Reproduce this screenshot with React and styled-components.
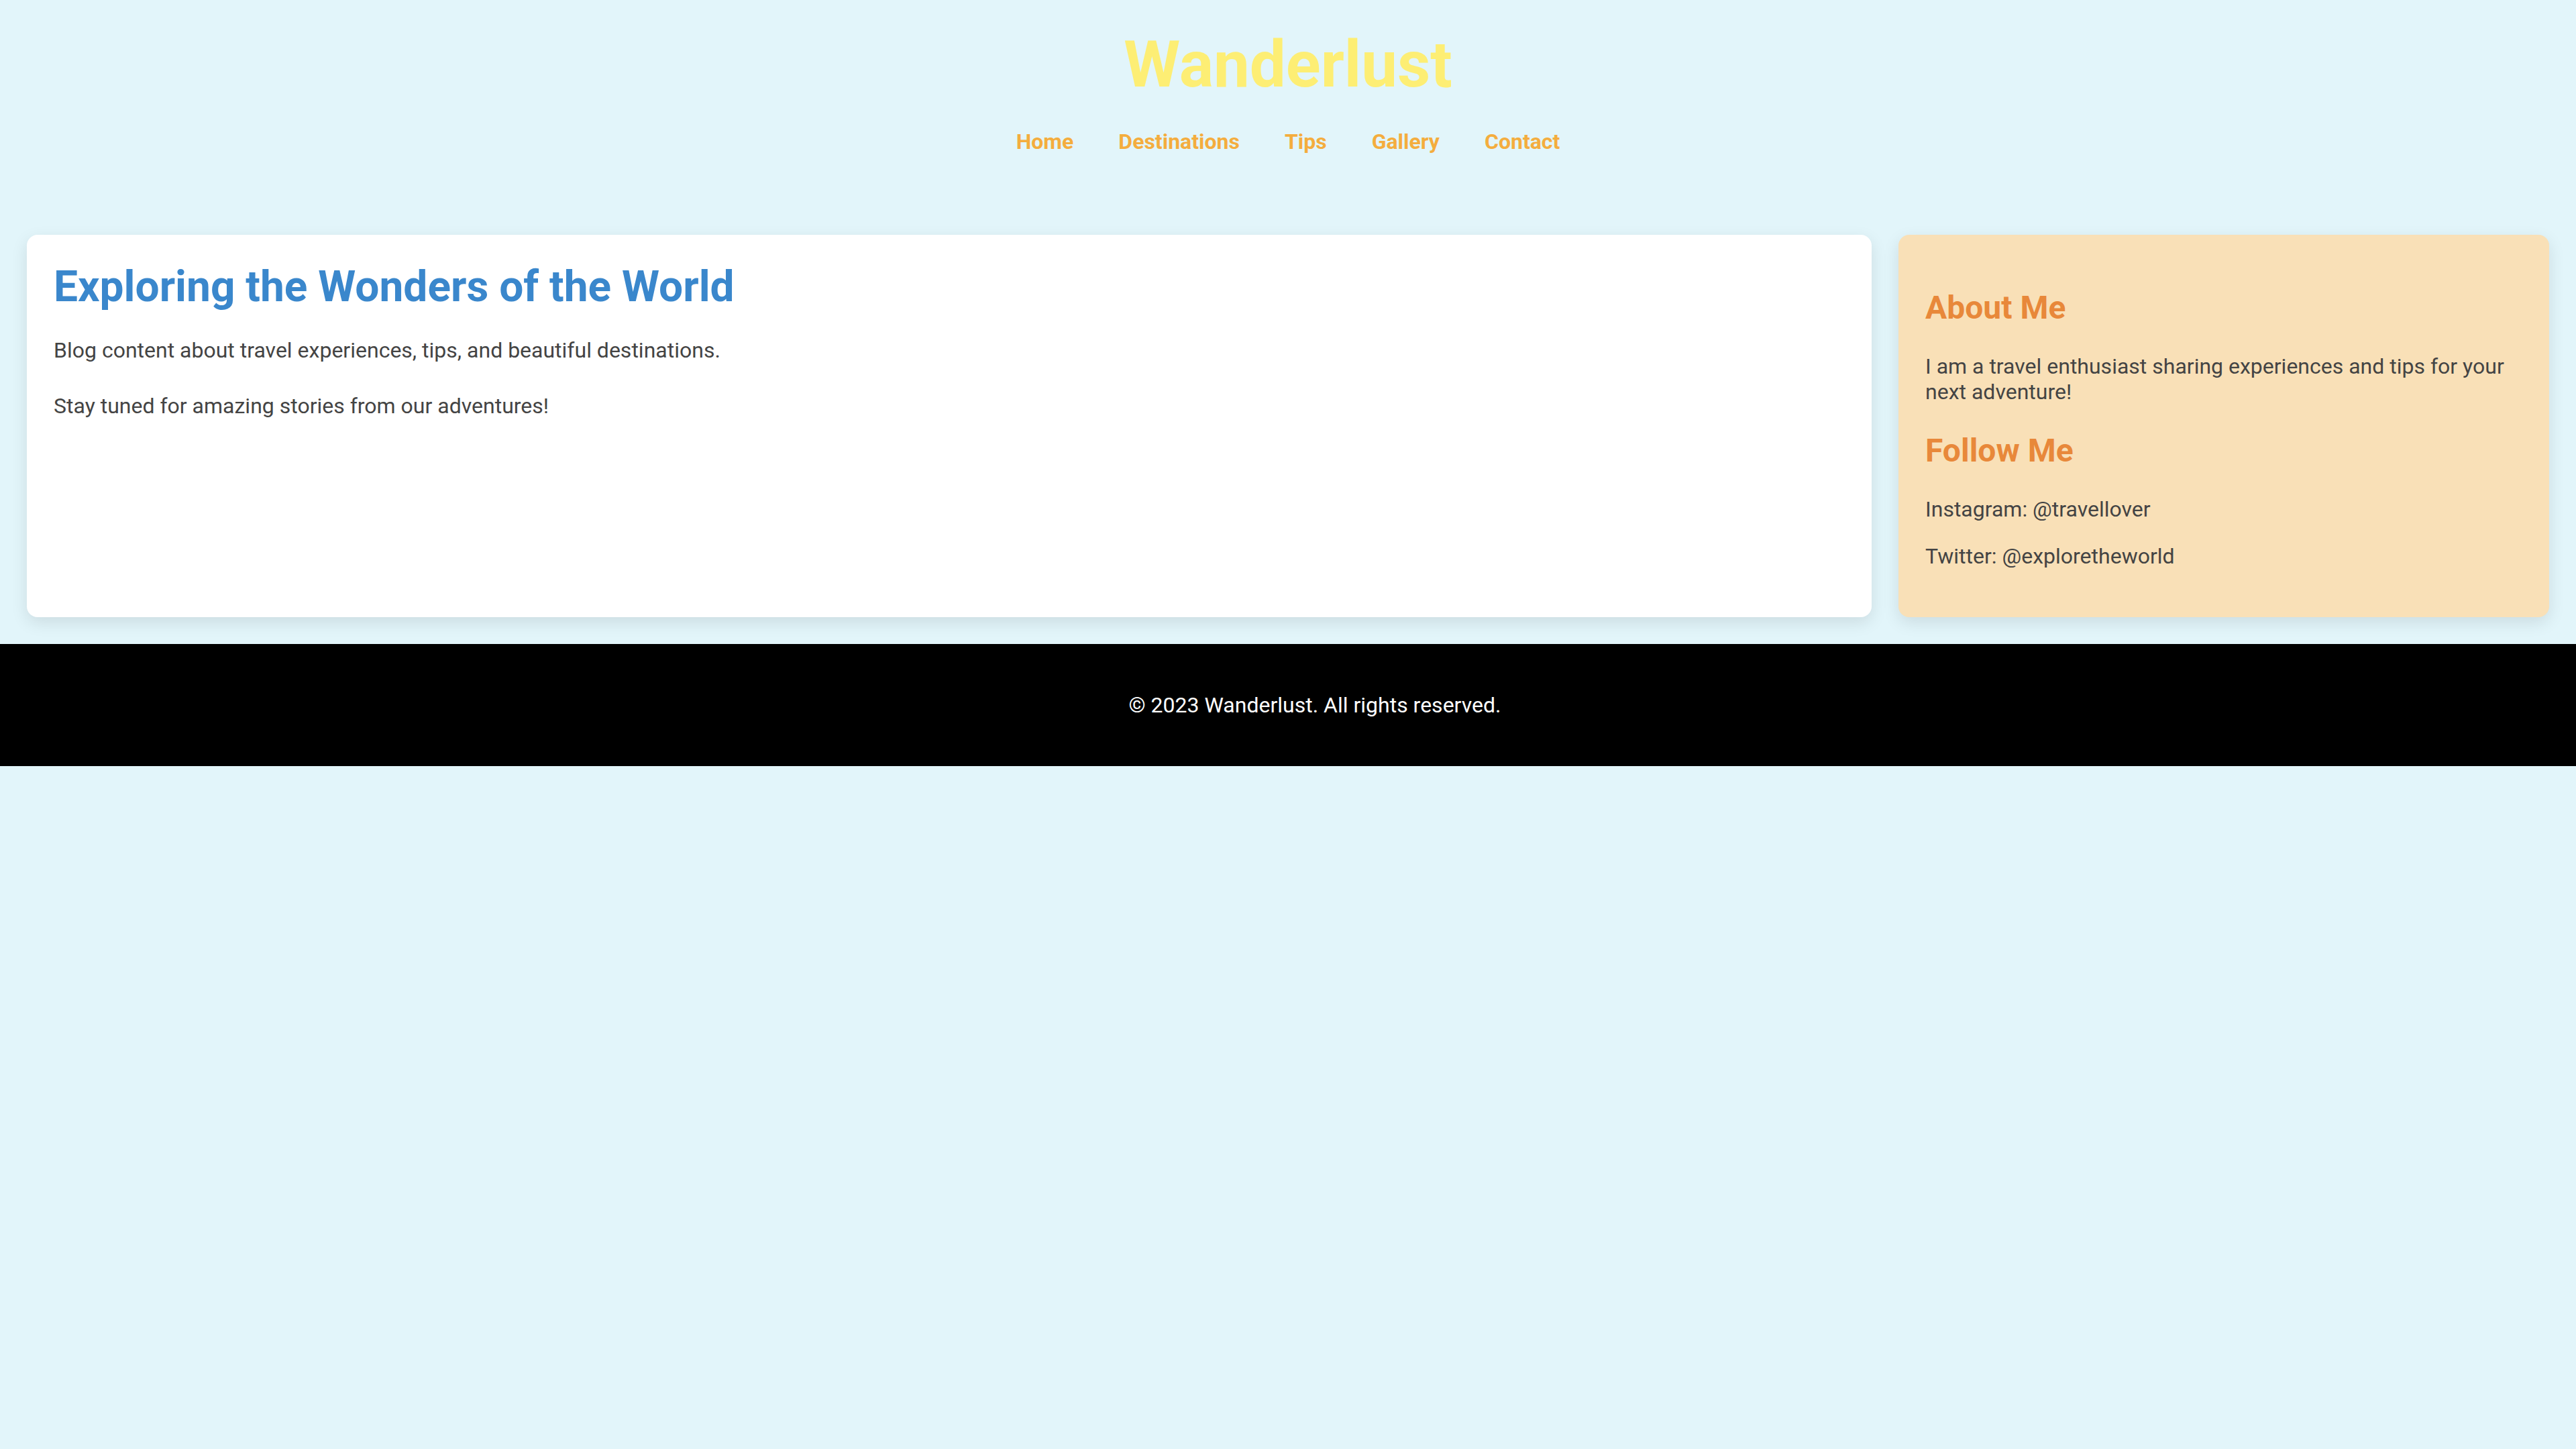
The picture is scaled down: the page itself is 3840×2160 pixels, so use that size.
import React from "react";
import styled, { createGlobalStyle } from "styled-components";

const GlobalStyle = createGlobalStyle`
  html, body {
    margin: 0;
    padding: 0;
    overflow-x: hidden;
    background-color: #e2f5fa;
    font-family: Roboto, "Liberation Sans", Arial, sans-serif;
    font-size: 32px;
    color: #444;
  }
`;

const App = () => {
  return (
    <>
      <GlobalStyle />
      <Header>
        <Logo>Wanderlust</Logo>
        <Nav>
          <NavLink href="#">Home</NavLink>
          <NavLink href="#">Destinations</NavLink>
          <NavLink href="#">Tips</NavLink>
          <NavLink href="#">Gallery</NavLink>
          <NavLink href="#">Contact</NavLink>
        </Nav>
      </Header>
      <Main>
        <Article>
          <ArticleTitle>Exploring the Wonders of the World</ArticleTitle>
          <ArticleText>
            Blog content about travel experiences, tips, and beautiful destinations.
          </ArticleText>
          <ArticleText>Stay tuned for amazing stories from our adventures!</ArticleText>
        </Article>
        <Sidebar>
          <SideTitle>About Me</SideTitle>
          <SideText>
            I am a travel enthusiast sharing experiences and tips for your next adventure!
          </SideText>
          <SideTitle>Follow Me</SideTitle>
          <SideText>Instagram: @travellover</SideText>
          <SideText>Twitter: @exploretheworld</SideText>
        </Sidebar>
      </Main>
      <Footer>
        <FooterText>© 2023 Wanderlust. All rights reserved.</FooterText>
      </Footer>
    </>
  );
};

export default App;

const Header = styled.header`
  padding: 40px 40px 40px;
  text-align: center;
`;

const Logo = styled.h1`
  margin: 0 0 40px;
  font-size: 96px;
  font-weight: 700;
  line-height: normal;
  color: #fdee74;
`;

const Nav = styled.nav`
  display: flex;
  justify-content: center;
  gap: 67px;
`;

const NavLink = styled.a`
  font-size: 32px;
  font-weight: 700;
  color: #f4ad3e;
  text-decoration: none;
`;

const Main = styled.main`
  display: flex;
  gap: 40px;
  padding: 80px 40px 40px;
`;

const Card = styled.section`
  padding: 40px;
  border-radius: 16px;
  box-shadow: 0 8px 24px rgba(0, 0, 0, 0.1);
`;

const Article = styled(Card)`
  flex: 3;
  background-color: #ffffff;
`;

const ArticleTitle = styled.h1`
  margin: 0 0 32px;
  font-size: 64px;
  font-weight: 700;
  line-height: normal;
  color: #3a87cc;
`;

const ArticleText = styled.p`
  margin: 0 0 32px;
  line-height: 1.6;
  color: #444;
`;

const Sidebar = styled(Card).attrs({ as: "aside" })`
  flex: 1;
  background-color: #f9e0b7;
`;

const SideTitle = styled.h2`
  margin: 40px 0;
  font-size: 48px;
  font-weight: 700;
  color: #e8883a;
`;

const SideText = styled.p`
  margin: 32px 0;
  color: #444;
`;

/* full width plus padding, so the text sits a little right of centre */
const Footer = styled.footer`
  width: 100%;
  padding: 40px;
  background-color: #000;
  text-align: center;
`;

const FooterText = styled.p`
  margin: 32px 0;
  color: #fff;
`;
